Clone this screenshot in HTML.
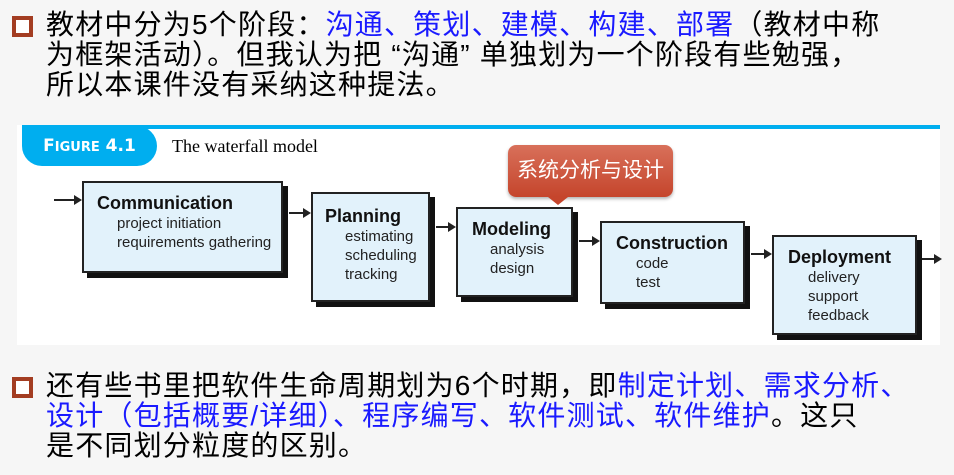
<!DOCTYPE html>
<html><head><meta charset="utf-8"><style>
body{margin:0;width:954px;height:475px;background:#f6f6f6;position:relative;overflow:hidden;font-family:"Liberation Sans","Noto Sans CJK SC",sans-serif}
.l{position:absolute;left:46px;font-size:28px;letter-spacing:1.2px;line-height:30px;white-space:nowrap;color:#000}
.b{color:#1a1aff}
.sq{position:absolute;left:12px;width:13px;height:13px;border:4px solid #a33d22;background:#fff}
.panel{position:absolute;left:17px;top:125px;width:923px;height:220px;background:#fff}
.bar{position:absolute;left:22px;top:125px;width:918px;height:4px;background:#00aeef}
.pill{position:absolute;left:22px;top:126px;width:135px;height:40px;background:#00aeef;border-radius:0 20px 20px 20px;color:#fff;font-weight:bold;font-size:17px;line-height:40px;text-align:center;font-family:"DejaVu Sans",sans-serif}
.cap{position:absolute;left:172px;top:136px;font-family:"Liberation Serif",serif;font-size:18px}
.box{position:absolute;background:#e2f2fb;border:2px solid #222;box-shadow:5px 5px 0 #111;font-family:"Liberation Sans",sans-serif;color:#222;font-size:15px;line-height:19px;white-space:nowrap}
.box h{display:block;font-weight:bold;font-size:18px;line-height:21px;color:#111}
.ar{position:absolute;height:2px;background:#222}
.ar:after{content:"";position:absolute;right:-2px;top:-4px;border-left:8px solid #222;border-top:5px solid transparent;border-bottom:5px solid transparent}
.call{position:absolute;left:508px;top:145px;width:165px;height:52px;border-radius:8px;background:linear-gradient(#d8705a,#c5452c);color:#fff;font-size:21px;line-height:52px;text-align:center;box-shadow:0 2px 3px rgba(0,0,0,.3)}
.call:after{content:"";position:absolute;left:40px;bottom:-8px;border-top:8px solid #c5452c;border-left:10px solid transparent;border-right:10px solid transparent}
</style></head><body>
<div class="sq" style="top:16px"></div>
<div class="l" style="top:10px">教材中分为5个阶段：<span class="b">沟通、策划、建模、构建、部署</span>（教材中称</div>
<div class="l" style="top:40px">为框架活动）。但我认为把 “沟通” 单独划为一个阶段有些勉强，</div>
<div class="l" style="top:70px">所以本课件没有采纳这种提法。</div>
<div class="panel"></div><div class="bar"></div>
<div class="pill">F<span style="font-size:13px">IGURE</span> 4.1</div>
<div class="cap">The waterfall model</div>
<div class="ar" style="left:54px;top:199px;width:26px"></div>
<div class="box" style="left:82px;top:181px;width:197px;height:88px"><div style="padding:10px 0 0 13px"><h>Communication</h><div style="padding-left:20px">project initiation<br>requirements gathering</div></div></div>
<div class="ar" style="left:289px;top:212px;width:20px"></div>
<div class="box" style="left:311px;top:192px;width:115px;height:106px"><div style="padding:12px 0 0 12px"><h>Planning</h><div style="padding-left:20px">estimating<br>scheduling<br>tracking</div></div></div>
<div class="ar" style="left:436px;top:226px;width:18px"></div>
<div class="box" style="left:456px;top:207px;width:113px;height:86px"><div style="padding:10px 0 0 14px"><h>Modeling</h><div style="padding-left:18px">analysis<br>design</div></div></div>
<div class="ar" style="left:579px;top:240px;width:19px"></div>
<div class="box" style="left:600px;top:221px;width:141px;height:79px"><div style="padding:10px 0 0 14px"><h>Construction</h><div style="padding-left:20px">code<br>test</div></div></div>
<div class="ar" style="left:751px;top:253px;width:19px"></div>
<div class="box" style="left:772px;top:235px;width:141px;height:96px"><div style="padding:10px 0 0 14px"><h>Deployment</h><div style="padding-left:20px">delivery<br>support<br>feedback</div></div></div>
<div class="ar" style="left:922px;top:258px;width:18px"></div>
<div class="call">系统分析与设计</div>
<div class="sq" style="top:377px"></div>
<div class="l" style="top:371px">还有些书里把软件生命周期划为6个时期，即<span class="b">制定计划、需求分析、</span></div>
<div class="l b" style="top:401px">设计（包括概要/详细）、程序编写、软件测试、软件维护<span style="color:#000">。这只</span></div>
<div class="l" style="top:431px">是不同划分粒度的区别。</div>
</body></html>
